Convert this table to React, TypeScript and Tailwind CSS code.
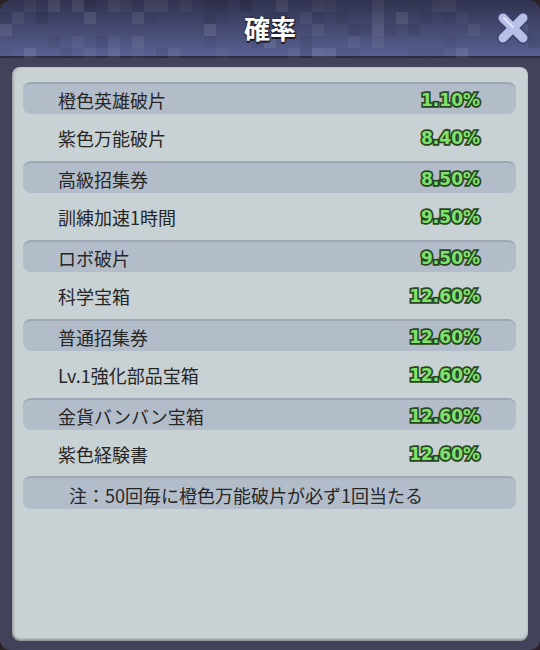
import React from "react";

const rows = [
	{ name: "橙色英雄破片", rate: "1.10%" },
	{ name: "紫色万能破片", rate: "8.40%" },
	{ name: "高級招集券", rate: "8.50%" },
	{ name: "訓練加速1時間", rate: "9.50%" },
	{ name: "ロボ破片", rate: "9.50%" },
	{ name: "科学宝箱", rate: "12.60%" },
	{ name: "普通招集券", rate: "12.60%" },
	{ name: "Lv.1強化部品宝箱", rate: "12.60%" },
	{ name: "金貨バンバン宝箱", rate: "12.60%" },
	{ name: "紫色経験書", rate: "12.60%" },
];

// header pixel noise, fixed seed so it doesn't change between renders
function pixels() {
	const out: { x: number; y: number; o: number; light: boolean }[] = [];
	let s = 7;
	const rnd = () => {
		s = (s * 9301 + 49297) % 233280;
		return s / 233280;
	};
	for (let y = 0; y < 58; y += 12) {
		for (let x = 0; x < 540; x += 12) {
			const r = rnd();
			if (r < 0.35) out.push({ x, y, o: 0.03 + rnd() * 0.06, light: rnd() > 0.4 });
		}
	}
	return out;
}

const px = pixels();

function CloseIcon() {
	return (
		<svg width="36" height="32" viewBox="0 0 36 32">
			<path d="M8 6 L28 26 M28 6 L8 26" stroke="#3d4170" strokeWidth="12" strokeLinecap="round" />
			<path d="M8 6 L28 26 M28 6 L8 26" stroke="#b8bfe6" strokeWidth="9" strokeLinecap="round" />
			<path d="M9 6 L18 15" stroke="#e1e5f9" strokeWidth="2" strokeLinecap="round" />
		</svg>
	);
}

export default function App() {
	return (
		<div className="w-[540px] h-[650px] bg-[#2b2226]">
			<div className="h-full flex flex-col rounded-t-[12px] rounded-b-[10px] bg-[#43425b] overflow-hidden">
				<header className="relative h-[58px] shrink-0 bg-gradient-to-b from-[#30324f] to-[#5a6193] border-b-2 border-[#2f2e44] flex items-center justify-center">
					<svg className="absolute inset-0" width="540" height="58">
						{px.map((p, i) => (
							<rect key={i} x={p.x} y={p.y} width="12" height="12" fill={p.light ? "#ffffff" : "#000000"} opacity={p.o} />
						))}
					</svg>
					<h1 className="relative text-white text-[26px] font-bold leading-none [font-family:'Noto_Sans_CJK_JP',sans-serif] [text-shadow:0_2px_0_#1c1b2b,0_0_2px_#1c1b2b,1px_1px_1px_#1c1b2b]">
						確率
					</h1>
					<div className="absolute right-[9px] top-[12px]">
						<CloseIcon />
					</div>
				</header>
				<main className="flex-1 mx-[12px] mt-[9px] mb-[9px] rounded-[8px] bg-[#c8d1d3] shadow-[inset_0_-2px_2px_rgba(0,0,0,0.25),inset_2px_0_2px_rgba(0,0,0,0.15)] pl-[11px] pr-[12px] pt-[11px] [font-family:'Noto_Sans_CJK_JP',sans-serif]">
					{rows.map((r, i) => (
						<div key={r.name} className="h-[39.5px] flex items-center">
							<div
								className={
									i % 2 === 0
										? "w-full h-[32px] rounded-[8px] bg-[#b3bdca] border-t-2 border-[#9ea8b4] flex items-center justify-between pl-[35px] pr-[36px]"
										: "w-full h-[32px] flex items-center justify-between pl-[35px] pr-[36px]"
								}
							>
								<span className="text-[18px] text-[#262626] leading-none pt-[2px]">{r.name}</span>
								<span className="text-[17px] font-bold text-[#80e16c] leading-none pt-[3px] [font-family:'DejaVu_Sans',sans-serif] [-webkit-text-stroke:3.5px_#2a4724] [paint-order:stroke_fill]">
									{r.rate}
								</span>
							</div>
						</div>
					))}
					<div className="h-[39.5px] flex items-center">
						<div className="w-full h-[33px] rounded-[8px] bg-[#b3bdca] border-t-2 border-[#9ea8b4] flex items-center pl-[46px]">
							<span className="text-[18px] text-[#262626] leading-none pt-[2px]">注：50回毎に橙色万能破片が必ず1回当たる</span>
						</div>
					</div>
				</main>
			</div>
		</div>
	);
}
